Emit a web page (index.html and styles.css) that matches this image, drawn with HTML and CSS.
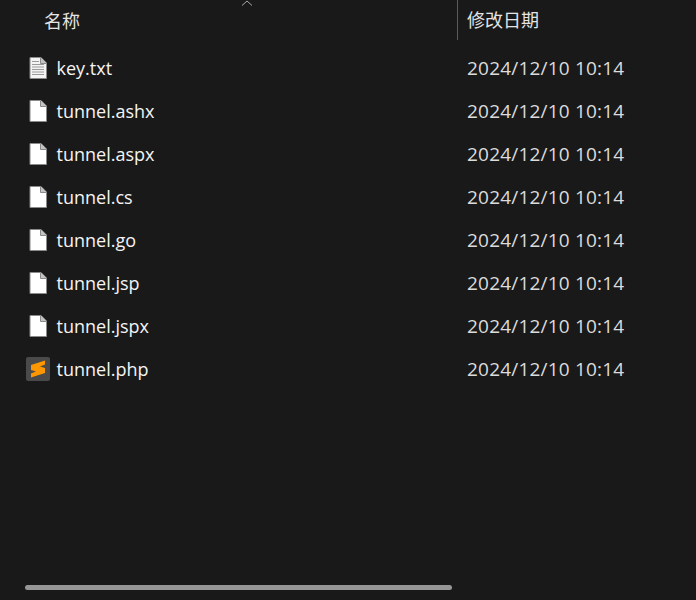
FILE: index.html
```html
<!DOCTYPE html>
<html lang="zh">
<head>
<meta charset="utf-8">
<title>文件列表</title>
<link rel="stylesheet" href="styles.css">
</head>
<body>
<svg class="defs" width="0" height="0" aria-hidden="true">
  <symbol id="blank" viewBox="0 0 18 22">
    <path d="M1 .5H12L17.500 6V21.500H1Z" fill="#fff" stroke="#8a8a8a"/>
    <path d="M11.500 .5V6.500H17.500" fill="#c4c4c4" stroke="#8a8a8a"/>
  </symbol>
</svg>
<div class="explorer">
  <header class="head">
    <div class="col-name">名称</div>
    <svg class="caret" width="12" height="6" viewBox="0 0 12 6"><path d="M1 5.500 6 1l5 4.500" fill="none" stroke="#a8a8a8"/></svg>
    <div class="col-date">修改日期</div>
  </header>
  <ul class="list">
    <li class="row">
      <span class="name"><span class="icon">
        <svg width="18" height="22" viewBox="0 0 18 22">
          <path d="M1 .5H12L17.500 6V21.500H1Z" fill="#f4f4f4" stroke="#8a8a8a"/>
          <path d="M11.500 .5V6.500H17.500" fill="#c4c4c4" stroke="#8a8a8a"/>
          <path d="M3 4.500H10M3 7.500H15M3 10H15M3 12.500H15M3 15H15M3 17.500H15" stroke="#9a9a9a" fill="none"/>
        </svg></span>key.txt</span>
      <span class="date">2024/12/10 10:14</span>
    </li>
    <li class="row"><span class="name"><span class="icon"><svg width="18" height="22"><use href="#blank"/></svg></span>tunnel.ashx</span><span class="date">2024/12/10 10:14</span></li>
    <li class="row"><span class="name"><span class="icon"><svg width="18" height="22"><use href="#blank"/></svg></span>tunnel.aspx</span><span class="date">2024/12/10 10:14</span></li>
    <li class="row"><span class="name"><span class="icon"><svg width="18" height="22"><use href="#blank"/></svg></span>tunnel.cs</span><span class="date">2024/12/10 10:14</span></li>
    <li class="row"><span class="name"><span class="icon"><svg width="18" height="22"><use href="#blank"/></svg></span>tunnel.go</span><span class="date">2024/12/10 10:14</span></li>
    <li class="row"><span class="name"><span class="icon"><svg width="18" height="22"><use href="#blank"/></svg></span>tunnel.jsp</span><span class="date">2024/12/10 10:14</span></li>
    <li class="row"><span class="name"><span class="icon"><svg width="18" height="22"><use href="#blank"/></svg></span>tunnel.jspx</span><span class="date">2024/12/10 10:14</span></li>
    <li class="row"><span class="name"><span class="icon icon-wide">
      <svg width="24" height="24" viewBox="0 0 24 24">
        <rect width="24" height="24" rx="2" fill="#4a4a4a"/>
        <path d="M19 3.500 5 8V13L10 14.500 5 16.500V20.500L19 16V11L14 9.500 19 7.500Z" fill="#ff9800"/>
      </svg></span>tunnel.php</span><span class="date">2024/12/10 10:14</span></li>
  </ul>
  <div class="track"><div class="thumb"></div></div>
</div>
</body>
</html>
```
FILE: styles.css
```css
* { box-sizing: border-box; }
html, body { margin: 0; height: 100%; }
body {
  background: #191919;
  color: #f4f4f4;
  font-family: "Open Sans", "Noto Sans CJK SC", sans-serif;
  font-size: 18px;
  overflow: hidden;
}
.defs { position: absolute; }
.explorer { display: flex; flex-direction: column; height: 600px; }
.head { display: flex; height: 40px; position: relative; flex: none; }
.col-name { width: 457px; padding: 9px 0 0 44px; font-size: 18px; line-height: 24px; color: #e4e4e4; }
.col-date { flex: 1; border-left: 1px solid #5c5c5c; padding: 8px 0 0 9px; font-size: 18px; line-height: 24px; color: #e4e4e4; }
.caret { position: absolute; left: 241px; top: 0; }
.list { list-style: none; margin: 6px 0 0; padding: 0; flex: 1; }
.row { display: flex; align-items: center; height: 43px; }
.name { width: 467px; display: flex; align-items: center; padding-left: 29px; }
.icon { width: 27.5px; display: flex; align-items: center; flex: none; }
.icon-wide { margin-left: -3px; width: 30.5px; }
.date { color: #dcdcdc; font-size: 19px; letter-spacing: 0.2px; }
.track { height: 5px; margin: 0 0 10px 25px; flex: none; }
.thumb { width: 427px; height: 5px; border-radius: 3px; background: #969696; }
```
